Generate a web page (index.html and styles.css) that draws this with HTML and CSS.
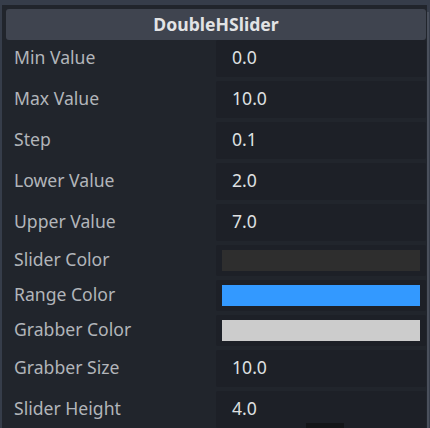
FILE: index.html
```html
<!DOCTYPE html>
<html>
<head>
<meta charset="utf-8">
<link rel="stylesheet" href="styles.css">
</head>
<body>
<div class="frame">
  <div class="panel">
    <div class="header">DoubleHSlider</div>
    <div class="props">
      <div class="row"><div class="label">Min Value</div><div class="value">0.0</div></div>
      <div class="row"><div class="label">Max Value</div><div class="value">10.0</div></div>
      <div class="row"><div class="label">Step</div><div class="value">0.1</div></div>
      <div class="row"><div class="label">Lower Value</div><div class="value">2.0</div></div>
      <div class="row"><div class="label">Upper Value</div><div class="value">7.0</div></div>
      <div class="row color-row"><div class="label">Slider Color</div><div class="value"><div class="swatch swatch-dark"></div></div></div>
      <div class="row color-row"><div class="label">Range Color</div><div class="value"><div class="swatch swatch-blue"></div></div></div>
      <div class="row color-row"><div class="label">Grabber Color</div><div class="value"><div class="swatch swatch-light"></div></div></div>
      <div class="row"><div class="label">Grabber Size</div><div class="value">10.0</div></div>
      <div class="row"><div class="label">Slider Height</div><div class="value">4.0</div></div>
    </div>
  </div>
  <div class="scroll"></div>
  <div class="tip"></div>
</div>
</body>
</html>
```
FILE: styles.css
```css
html, body {
  margin: 0;
  padding: 0;
  background: #363d4a;
  width: 430px;
  height: 428px;
  overflow: hidden;
  font-family: "Noto Sans", "Open Sans", sans-serif;
}
.frame {
  position: relative;
  display: flex;
  padding: 5px 0 0 2px;
  height: 423px;
}
.panel {
  width: 425px;
  background: #21252c;
  padding: 4px 0 0 4px;
  box-sizing: border-box;
}
.header {
  width: 420px;
  height: 31px;
  background: #3f444f;
  border-radius: 3px;
  color: #e2e3e5;
  font-weight: bold;
  font-size: 17.6px;
  line-height: 31px;
  text-align: center;
}
.props {
  display: flex;
  flex-direction: column;
  gap: 4px;
  width: 420px;
}
.row {
  display: grid;
  grid-template-columns: 210px 210px;
  height: 37px;
}
.row.color-row {
  height: 31px;
}
.label {
  padding-left: 8px;
  color: #b2b5ba;
  font-size: 17.6px;
  line-height: 35px;
  white-space: nowrap;
}
.color-row .label {
  line-height: 29px;
}
.value {
  background: #1d2027;
  border-radius: 2px;
  color: #dfe0e2;
  font-size: 17.6px;
  line-height: 35px;
  padding-left: 16px;
}
.color-row .value {
  padding: 5px 6px;
  box-sizing: border-box;
}
.swatch {
  height: 21px;
}
.swatch-dark { background: #2e2e2e; }
.swatch-blue { background: #3399ff; }
.swatch-light { background: #cccccc; }
.scroll {
  width: 2px;
  margin-top: 7px;
  background: #4a505c;
}
.tip {
  position: absolute;
  left: 306px;
  top: 423px;
  width: 38px;
  height: 5px;
  background: #131518;
}
```
